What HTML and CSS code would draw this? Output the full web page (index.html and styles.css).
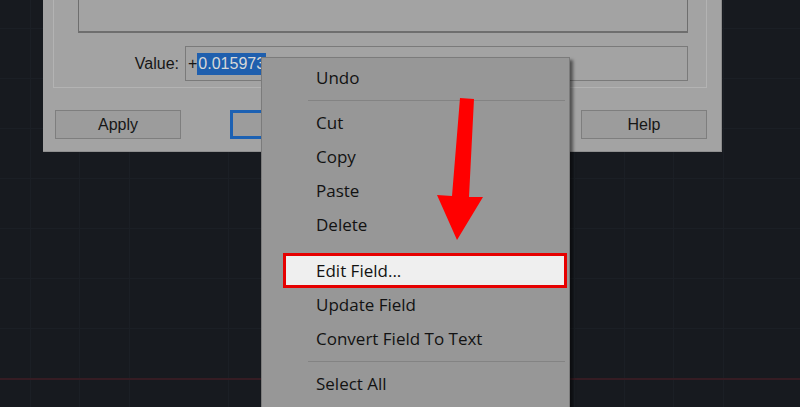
FILE: index.html
```html
<!DOCTYPE html>
<html>
<head>
<meta charset="utf-8">
<link rel="stylesheet" href="styles.css">
</head>
<body>
<div class="desktop">
  <div class="dialog">
    <div class="group">
      <div class="preview"></div>
      <div class="value-row">
        <span class="label">Value:</span>
        <div class="input"><span class="plus">+</span><span class="sel">0.015973</span></div>
      </div>
    </div>
    <div class="buttons">
      <div class="btn">Apply</div>
      <div class="btn focus">OK</div>
      <div class="btn">Cancel</div>
      <div class="btn">Help</div>
    </div>
  </div>

  <div class="menu">
    <div class="item">Undo</div>
    <div class="sep"></div>
    <div class="item">Cut</div>
    <div class="item">Copy</div>
    <div class="item">Paste</div>
    <div class="item">Delete</div>
    <div class="sep hidden"></div>
    <div class="item hl">Edit Field...</div>
    <div class="item">Update Field</div>
    <div class="item">Convert Field To Text</div>
    <div class="sep"></div>
    <div class="item">Select All</div>
  </div>

  <svg class="arrow" width="800" height="407" viewBox="0 0 800 407">
    <polygon points="460,98 474,99 469,197 483,197 457,240 437,195 452,196" fill="#ff0000"/>
  </svg>
</div>
</body>
</html>
```
FILE: styles.css
```css
html, body {
  margin: 0;
  padding: 0;
  width: 800px;
  height: 407px;
  overflow: hidden;
}

.desktop {
  position: relative;
  width: 800px;
  height: 407px;
  overflow: hidden;
  background-color: #171a1f;
  background-image:
    linear-gradient(180deg, transparent 378px, #351c23 378px, #351c23 380px, transparent 380px),
    repeating-linear-gradient(90deg, transparent 0, transparent 30px, #1b1f25 30px, #1b1f25 31px, transparent 31px, transparent 49.5px),
    repeating-linear-gradient(180deg, transparent 0, transparent 28px, #1b1f25 28px, #1b1f25 29px, transparent 29px, transparent 50px);
  font-family: "Liberation Sans", Arial, sans-serif;
  color: #1a1a1a;
}

.dialog {
  width: 679px;
  margin: -40px 0 0 43px;
  padding: 10px 14px 12px 10px;
  box-sizing: border-box;
  background: #a3a3a3;
  border-right: 1px solid #8a8a8a;
  border-bottom: 1px solid #8f8f8f;
}

.group {
  border: 1px solid #b3b3b3;
  padding: 10px 18px 6px 24px;
}

.preview {
  height: 52px;
  box-sizing: border-box;
  border: 1px solid #6e6e6e;
  border-bottom-width: 2px;
}

.value-row {
  display: flex;
  align-items: center;
  margin-top: 13px;
}

.label {
  width: 101px;
  text-align: right;
  font-size: 16px;
  margin-right: 6px;
  color: #161616;
}

.input {
  flex: 1;
  height: 35px;
  box-sizing: border-box;
  border: 1px solid #7a7a7a;
  display: flex;
  align-items: center;
  padding-left: 2px;
  font-size: 16px;
}

.plus { color: #161616; }

.sel {
  background: #1f5fae;
  color: #d8d8d8;
  line-height: 22px;
  padding: 0 1px;
}

.buttons {
  display: flex;
  justify-content: space-between;
  margin: 22px 0 0 2px;
}

.btn {
  width: 126px;
  height: 29px;
  box-sizing: border-box;
  border: 1px solid #7e7e7e;
  background: #9c9c9c;
  display: flex;
  align-items: center;
  justify-content: center;
  font-size: 16px;
  color: #161616;
}

.btn.focus {
  border: 3px solid #1c61b3;
}

.menu {
  position: absolute;
  left: 261px;
  top: 57px;
  width: 309px;
  height: 370px;
  box-sizing: border-box;
  background: #979797;
  border: 1px solid #7b7b7b;
  box-shadow: 3px 3px 3px rgba(0, 0, 0, 0.5);
  padding-top: 3px;
  font-family: "Open Sans", "Noto Sans", sans-serif;
  font-size: 17px;
  color: #121212;
}

.item {
  height: 34px;
  line-height: 34px;
  padding-left: 54px;
}

.item.hl {
  margin: 0 2px 0 21px;
  padding-left: 30px;
  height: 35px;
  line-height: 29px;
  box-sizing: border-box;
  border: 3px solid #e60000;
  background: #efefef;
}

.sep {
  height: 11px;
  margin: 0 4px 0 46px;
  background: linear-gradient(180deg, transparent 5px, #838383 5px, #838383 6px, transparent 6px);
}

.sep.hidden {
  background: none;
}

.arrow {
  position: absolute;
  left: 0;
  top: 0;
}
```
